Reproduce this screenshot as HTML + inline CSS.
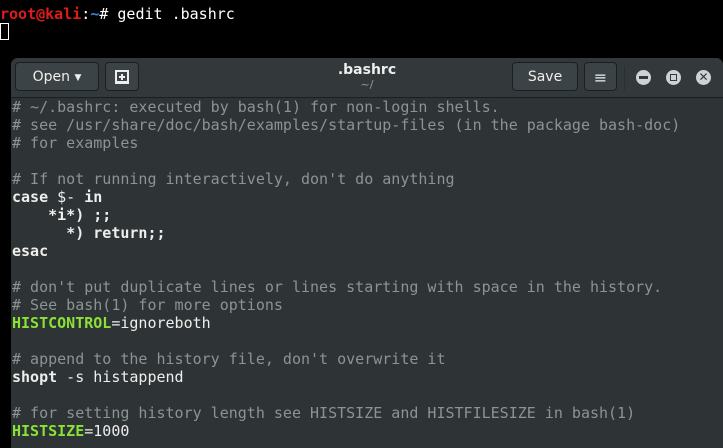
<!DOCTYPE html>
<html><head><style>
body{margin:0;width:723px;height:437px;background:#000;overflow:hidden;position:relative;font-family:"DejaVu Sans Mono",monospace}
.term{position:absolute;left:0;top:5px;font-size:15px;line-height:18px;color:#fff;white-space:pre}
.win{position:absolute;left:11px;top:58px;width:712px;height:390px;background:#2e3436;border-radius:7px 7px 0 0;overflow:hidden}
.hb{position:absolute;left:0;top:0;width:100%;height:39px;background:#33393b;border-bottom:1px solid #1c1f20}
.btn{position:absolute;top:4px;height:29px;border:1px solid #1b1f20;border-radius:4px;background:#3c4347;color:#eeeeec;font-family:"DejaVu Sans",sans-serif;font-size:14px;line-height:29px;text-align:center;box-sizing:border-box}
.code{position:absolute;left:1px;top:40px;font-size:15px;line-height:18px;color:#eeeeec;white-space:pre}
.c{color:#8d9393}.b{font-weight:bold}.g{color:#8ae234;font-weight:bold}
.circ{position:absolute;top:12px;width:15px;height:15px;border-radius:50%;background:#cfd2d2}
</style></head><body>
<div class="term"><span style="color:#e01b1b;font-weight:bold">root@kali</span>:<span style="color:#3d7fe0;font-weight:bold">~</span># gedit .bashrc
<span style="display:inline-block;width:9px;height:17px;border:1px solid #fff;box-sizing:border-box;vertical-align:top"></span></div>
<div class="win">
<div class="hb">
<div class="btn" style="left:4px;width:84px">Open <span style="font-size:9px;vertical-align:1px">&#9660;</span></div>
<div class="btn" style="left:94px;width:34px"><svg width="16" height="16" viewBox="0 0 16 16" style="margin-top:6px"><path d="M2 2h12v11H2z" fill="none" stroke="#eee" stroke-width="2"/><path d="M8 5v6M5 8h6" stroke="#eee" stroke-width="2"/><path d="M1 13h14v2H1z" fill="#eee"/></svg></div>
<div style="position:absolute;left:0;width:100%;top:3px;text-align:center;font-family:'DejaVu Sans',sans-serif;font-size:14px;font-weight:bold;color:#eeeeec;line-height:18px">.bashrc</div>
<div style="position:absolute;left:0;width:100%;top:20px;text-align:center;font-family:'DejaVu Sans',sans-serif;font-size:11px;color:#999;line-height:14px">~/</div>
<div class="btn" style="left:501px;width:66px">Save</div>
<div class="btn" style="left:573px;width:33px;font-size:16px">&#8801;</div>
<div style="position:absolute;left:613px;top:8px;width:1px;height:24px;background:#2a2f30"></div>
<div class="circ" style="left:625px"><div style="position:absolute;left:3px;top:6px;width:9px;height:3px;background:#33393b"></div></div>
<div class="circ" style="left:655px"><div style="position:absolute;left:4px;top:4px;width:7px;height:7px;border:1.5px solid #33393b;box-sizing:border-box"></div></div>
<div class="circ" style="left:685px;color:#33393b;font-size:12px;line-height:15px;text-align:center;font-weight:bold;font-family:'DejaVu Sans'">✕</div>
</div>
<div class="code"><span class="c"># ~/.bashrc: executed by bash(1) for non-login shells.
# see /usr/share/doc/bash/examples/startup-files (in the package bash-doc)
# for examples</span>

<span class="c"># If not running interactively, don't do anything</span>
<span class="b">case</span> $- <span class="b">in</span>
    <span class="b">*i*) ;;</span>
      <span class="b">*) return;;</span>
<span class="b">esac</span>

<span class="c"># don't put duplicate lines or lines starting with space in the history.
# See bash(1) for more options</span>
<span class="g">HISTCONTROL</span>=ignoreboth

<span class="c"># append to the history file, don't overwrite it</span>
<span class="b">shopt</span> -s histappend

<span class="c"># for setting history length see HISTSIZE and HISTFILESIZE in bash(1)</span>
<span class="g">HISTSIZE</span>=1000</div>
</div>
</body></html>
